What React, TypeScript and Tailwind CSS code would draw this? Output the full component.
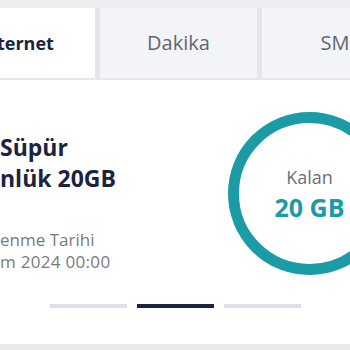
export default function App() {
  const tabs = [
    { label: "Internet", active: true },
    { label: "Dakika", active: false },
    { label: "SMS", active: false },
  ];

  return (
    <div
      className="w-[350px] h-[350px] overflow-hidden bg-white flex flex-col"
      style={{ fontFamily: "'Open Sans', 'Noto Sans', sans-serif" }}
    >
      {/* ust bant */}
      <div className="h-2 shrink-0 bg-[#eceef2]" />

      {/* sekmeler */}
      <div className="flex shrink-0 ml-[-62px] w-[481px] gap-[5px] bg-[#e3e6ec] border-b-2 border-[#e6e8ec]">
        {tabs.map((tab) => (
          <div
            key={tab.label}
            className={
              tab.active
                ? "w-[157px] h-[70px] flex items-center justify-center bg-white text-[18px] font-bold text-[#1c2340]"
                : "w-[157px] h-[70px] flex items-center justify-center bg-[#f3f4f7] text-[20px] text-[#5f6475]"
            }
          >
            {tab.label}
          </div>
        ))}
      </div>

      {/* paket karti */}
      <div className="flex flex-1 pt-[32px]">
        <div className="w-[228px] shrink-0 flex flex-col">
          <div className="pt-[20px] text-[23px] leading-[31px] font-bold text-[#1c2340] whitespace-nowrap">
            <div>Süpür</div>
            <div>nlük 20GB</div>
          </div>
          <div className="mt-[35px] text-[17px] leading-[22px] text-[#7a7a7a] whitespace-nowrap">
            <div>enme Tarihi</div>
            <div className="tracking-[0.3px]">m 2024 00:00</div>
          </div>
        </div>

        <div className="w-[163px] h-[163px] shrink-0 rounded-full border-[11px] border-[#1a9ba6] flex flex-col items-center justify-center">
          <span className="text-[18px] leading-[22px] text-[#6b6e78]">Kalan</span>
          <span className="mt-[4px] text-[25px] leading-[30px] font-bold text-[#1a9ba6]">20 GB</span>
        </div>
      </div>

      {/* sayfa gostergesi */}
      <div className="flex justify-center gap-[10px] pb-[36px]">
        <div className="w-[77px] h-[4px] bg-[#dde1e8]" />
        <div className="w-[77px] h-[4px] bg-[#1c2340]" />
        <div className="w-[77px] h-[4px] bg-[#dde1e8]" />
      </div>

      <div className="h-[6px] shrink-0 bg-[#e8e9ec]" />
    </div>
  );
}
